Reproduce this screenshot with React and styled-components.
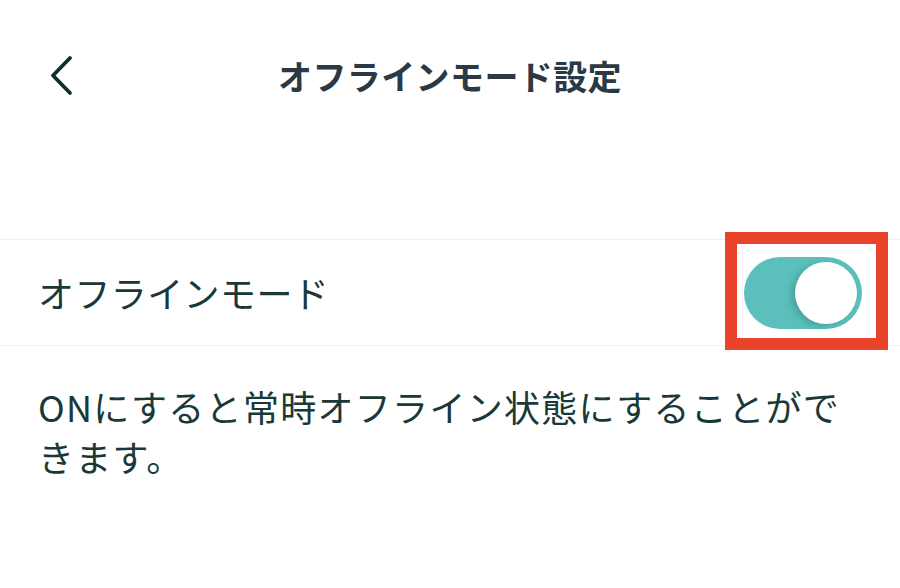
import React from "react";
import styled, { createGlobalStyle } from "styled-components";

const Global = createGlobalStyle`
  html, body { margin: 0; padding: 0; background: #ffffff; }
  body { font-family: "Noto Sans CJK JP", "Noto Sans", sans-serif; }
  * { box-sizing: border-box; }
`;

const Page = styled.div`
  width: 900px;
  height: 588px;
  background: #ffffff;
  display: flex;
  flex-direction: column;
  overflow: hidden;
`;

const Header = styled.header`
  height: 152px;
  display: grid;
  grid-template-columns: 120px 1fr 120px;
  align-items: center;
`;

const BackButton = styled.button`
  border: none;
  background: none;
  padding: 0 0 0 49px;
  height: 48px;
  display: flex;
  align-items: center;
  cursor: pointer;
`;

const Title = styled.h1`
  margin: 0;
  text-align: center;
  font-size: 34px;
  font-weight: 700;
  letter-spacing: 0.4px;
  color: #2b3945;
  line-height: 1;
`;

const Spacer = styled.div`
  height: 87px;
`;

const Row = styled.div`
  position: relative;
  height: 107px;
  border-top: 1px solid #efefef;
  border-bottom: 1px solid #efefef;
  display: flex;
  align-items: center;
  justify-content: space-between;
  padding: 0 38px 0 38px;
`;

const RowLabel = styled.span`
  font-size: 36px;
  color: #193838;
  line-height: 1;
  letter-spacing: 0.4px;
  margin-top: -2px;
`;

const ToggleWrap = styled.div`
  position: relative;
`;

const Track = styled.div`
  width: 118px;
  height: 72px;
  border-radius: 36px;
  background: ${(p) => (p.$on ? "#5bbfbb" : "#d8d8d8")};
  position: relative;
  margin-top: 0;
`;

const Knob = styled.div`
  position: absolute;
  top: 5px;
  left: ${(p) => (p.$on ? "51px" : "5px")};
  width: 62px;
  height: 62px;
  border-radius: 50%;
  background: #ffffff;
  box-shadow: -4px 2px 6px rgba(20, 80, 80, 0.25);
`;

const Highlight = styled.div`
  position: absolute;
  left: -19px;
  top: -25px;
  width: 163px;
  height: 118px;
  border: 12px solid #e9432b;
  pointer-events: none;
`;

const Description = styled.p`
  margin: 0;
  padding: 35px 45px 0 38px;
  font-size: 36px;
  line-height: 50px;
  letter-spacing: 1.3px;
  color: #193838;
`;

export default function App() {
  const on = true;
  return (
    <>
      <Global />
      <Page>
        <Header>
          <BackButton aria-label="戻る">
            <svg width="26" height="42" viewBox="0 0 26 42" fill="none">
              <path
                d="M21 3 L4 20.5 L21 38"
                stroke="#0f2e2e"
                strokeWidth="3.8"
                strokeLinecap="round"
                strokeLinejoin="round"
              />
            </svg>
          </BackButton>
          <Title>オフラインモード設定</Title>
          <div />
        </Header>
        <Spacer />
        <Row>
          <RowLabel>オフラインモード</RowLabel>
          <ToggleWrap>
            <Track $on={on}>
              <Knob $on={on} />
            </Track>
            <Highlight />
          </ToggleWrap>
        </Row>
        <Description>
          ONにすると常時オフライン状態にすることができます。
        </Description>
      </Page>
    </>
  );
}
